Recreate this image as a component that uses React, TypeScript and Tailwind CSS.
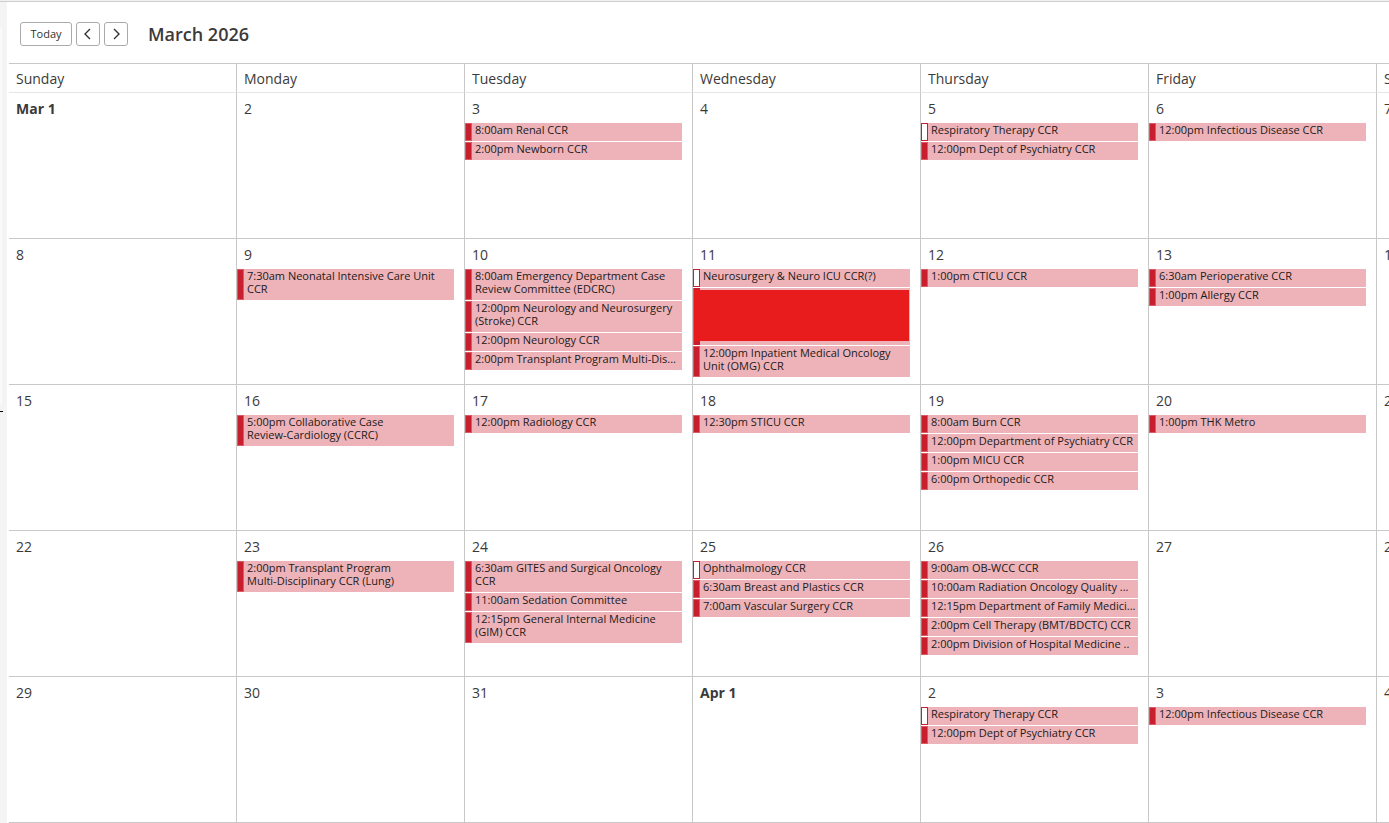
import clsx from "clsx";

type CalendarEvent = {
  lines: string[];
  tentative?: boolean;
  redacted?: boolean;
};

type Day = {
  label: string;
  firstOfMonth?: boolean;
  events?: CalendarEvent[];
};

const WEEKDAYS = ["Sunday", "Monday", "Tuesday", "Wednesday", "Thursday", "Friday", "Saturday"];

const ev = (...lines: string[]): CalendarEvent => ({ lines });

const WEEKS: Day[][] = [
  [
    { label: "Mar 1", firstOfMonth: true },
    { label: "2" },
    { label: "3", events: [ev("8:00am Renal CCR"), ev("2:00pm Newborn CCR")] },
    { label: "4" },
    {
      label: "5",
      events: [
        { lines: ["Respiratory Therapy CCR"], tentative: true },
        ev("12:00pm Dept of Psychiatry CCR"),
      ],
    },
    { label: "6", events: [ev("12:00pm Infectious Disease CCR")] },
    { label: "7" },
  ],
  [
    { label: "8" },
    { label: "9", events: [ev("7:30am Neonatal Intensive Care Unit", "CCR")] },
    {
      label: "10",
      events: [
        ev("8:00am Emergency Department Case", "Review Committee (EDCRC)"),
        ev("12:00pm Neurology and Neurosurgery", "(Stroke) CCR"),
        ev("12:00pm Neurology CCR"),
        ev("2:00pm Transplant Program Multi-Dis..."),
      ],
    },
    {
      label: "11",
      events: [
        { lines: ["Neurosurgery & Neuro ICU CCR(?)"], tentative: true },
        { lines: [], redacted: true },
        ev("12:00pm Inpatient Medical Oncology", "Unit (OMG) CCR"),
      ],
    },
    { label: "12", events: [ev("1:00pm CTICU CCR")] },
    { label: "13", events: [ev("6:30am Perioperative CCR"), ev("1:00pm Allergy CCR")] },
    { label: "14" },
  ],
  [
    { label: "15" },
    { label: "16", events: [ev("5:00pm Collaborative Case", "Review-Cardiology (CCRC)")] },
    { label: "17", events: [ev("12:00pm Radiology CCR")] },
    { label: "18", events: [ev("12:30pm STICU CCR")] },
    {
      label: "19",
      events: [
        ev("8:00am Burn CCR"),
        ev("12:00pm Department of Psychiatry CCR"),
        ev("1:00pm MICU CCR"),
        ev("6:00pm Orthopedic CCR"),
      ],
    },
    { label: "20", events: [ev("1:00pm THK Metro")] },
    { label: "21" },
  ],
  [
    { label: "22" },
    { label: "23", events: [ev("2:00pm Transplant Program", "Multi-Disciplinary CCR (Lung)")] },
    {
      label: "24",
      events: [
        ev("6:30am GITES and Surgical Oncology", "CCR"),
        ev("11:00am Sedation Committee"),
        ev("12:15pm General Internal Medicine", "(GIM) CCR"),
      ],
    },
    {
      label: "25",
      events: [
        { lines: ["Ophthalmology CCR"], tentative: true },
        ev("6:30am Breast and Plastics CCR"),
        ev("7:00am Vascular Surgery CCR"),
      ],
    },
    {
      label: "26",
      events: [
        ev("9:00am OB-WCC CCR"),
        ev("10:00am Radiation Oncology Quality ..."),
        ev("12:15pm Department of Family Medici..."),
        ev("2:00pm Cell Therapy (BMT/BDCTC) CCR"),
        ev("2:00pm Division of Hospital Medicine .."),
      ],
    },
    { label: "27" },
    { label: "28" },
  ],
  [
    { label: "29" },
    { label: "30" },
    { label: "31" },
    { label: "Apr 1", firstOfMonth: true },
    {
      label: "2",
      events: [
        { lines: ["Respiratory Therapy CCR"], tentative: true },
        ev("12:00pm Dept of Psychiatry CCR"),
      ],
    },
    { label: "3", events: [ev("12:00pm Infectious Disease CCR")] },
    { label: "4" },
  ],
];

export default function App() {
  return (
    <div className="flex min-h-screen flex-col overflow-hidden bg-white font-['Open_Sans','Noto_Sans',sans-serif] text-[#3b3a39]">
      <div className="h-[2px] border-b border-[#cfcfcf] bg-[#f0f0f0]" />
      <div className="flex flex-1">
        <Gutter />
        <main className="min-w-0 flex-1 overflow-hidden pl-[2px]">
          <Toolbar />
          <table className="w-full min-w-[1596px] table-fixed border-separate border-spacing-0 border-t border-[#c8c8c8]">
            <thead>
              <tr>
                {WEEKDAYS.map((day) => (
                  <th
                    key={day}
                    scope="col"
                    className="h-[29px] border-r border-b border-r-[#c8c8c8] border-b-[#e6e6e6] px-[7px] pt-[2px] pb-0 text-left text-sm leading-5 font-normal"
                  >
                    {day}
                  </th>
                ))}
              </tr>
            </thead>
            <tbody>
              {WEEKS.map((week, i) => (
                <tr key={i}>
                  {week.map((day) => (
                    <DayCell key={day.label} day={day} />
                  ))}
                </tr>
              ))}
            </tbody>
          </table>
        </main>
      </div>
    </div>
  );
}

function Gutter() {
  return (
    <div className="w-[7px] shrink-0 bg-[#f4f4f4]">
      <div className="mt-[26px] h-[376px] w-[2px] bg-[#fafafa]" />
      <div className="mt-[7px] h-px w-[3px] bg-black" />
    </div>
  );
}

function Toolbar() {
  const button =
    "flex h-6 items-center justify-center rounded-[3px] border border-[#ababab] bg-white text-[#333333]";

  return (
    <header className="flex h-[61px] items-center gap-1 pt-[3px] pl-[11px]">
      <button type="button" className={clsx(button, "w-[52px] text-[11px]")}>
        Today
      </button>
      <button type="button" aria-label="Previous month" className={clsx(button, "w-6")}>
        <Chevron points="8,1 3,6 8,11" />
      </button>
      <button type="button" aria-label="Next month" className={clsx(button, "w-6")}>
        <Chevron points="4,1 9,6 4,11" />
      </button>
      <h1 className="ml-4 text-lg leading-6 font-semibold">March 2026</h1>
    </header>
  );
}

function Chevron({ points }: { points: string }) {
  return (
    <svg width="12" height="12" viewBox="0 0 12 12" fill="none" stroke="currentColor" strokeWidth="1.4">
      <polyline points={points} />
    </svg>
  );
}

function DayCell({ day }: { day: Day }) {
  return (
    <td className="h-[146px] border-r border-b border-[#c8c8c8] p-0 align-top">
      <div className={clsx("h-[30px] px-[7px] pt-[6px] text-sm leading-5", day.firstOfMonth && "font-bold")}>
        {day.label}
      </div>
      {day.events && (
        <ul className="flex flex-col gap-px pr-[10px]">
          {day.events.map((event, i) => (
            <EventItem key={i} event={event} />
          ))}
        </ul>
      )}
    </td>
  );
}

function EventItem({ event }: { event: CalendarEvent }) {
  return (
    <li className="flex bg-[#eeb3b8]">
      {event.redacted ? (
        <div className="h-[57px] flex-1 border-l border-[#dc5a66] pr-px">
          <div className="h-[2px] w-[6px] bg-[#c81e2d]" />
          <div className="h-[51px] bg-[#e81c1c]" />
          <div className="h-1 w-[6px] bg-[#c81e2d]" />
        </div>
      ) : (
        <>
          <span
            className={clsx(
              "w-[7px] shrink-0 border",
              event.tentative ? "border-[#c81e2d] bg-white" : "border-[#dc5a66] bg-[#c81e2d]",
            )}
          />
          <div className="pb-[5px] pl-[3px] text-[11px] leading-[13px] whitespace-nowrap text-[#221a1b]">
            {event.lines.map((line) => (
              <div key={line}>{line}</div>
            ))}
          </div>
        </>
      )}
    </li>
  );
}
